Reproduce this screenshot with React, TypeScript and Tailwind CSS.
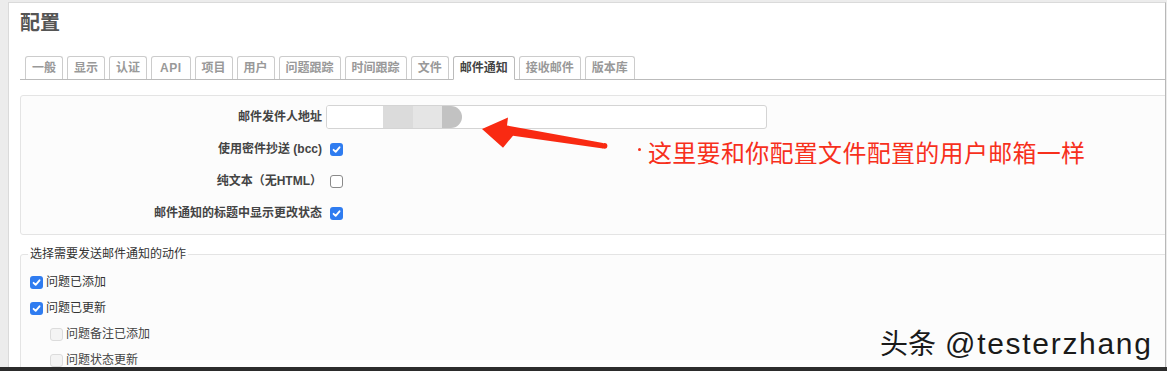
import React from "react";

const tabs = ["一般", "显示", "认证", "API", "项目", "用户", "问题跟踪", "时间跟踪", "文件", "邮件通知", "接收邮件", "版本库"];

function Check({ on, disabled }: { on?: boolean; disabled?: boolean }) {
  if (disabled) {
    return <span className="block w-[13px] h-[13px] rounded-[3px] border border-[#dcdcdc] bg-[#f4f4f4] shrink-0" />;
  }
  if (!on) {
    return <span className="block w-[13px] h-[13px] rounded-[3px] border border-[#8a8a8a] bg-white shrink-0" />;
  }
  return (
    <span className="flex items-center justify-center w-[13px] h-[13px] rounded-[3px] bg-[#2f7cf0] shrink-0">
      <svg width="11" height="11" viewBox="0 0 12 12">
        <path d="M2.8 6.3 L5.1 8.6 L9.3 3.6" fill="none" stroke="#fff" strokeWidth="2" strokeLinecap="round" strokeLinejoin="round" />
      </svg>
    </span>
  );
}

function Row({ label, children }: { label: React.ReactNode; children: React.ReactNode }) {
  return (
    <div className="h-[32px] flex items-center">
      <div className="w-[296px] text-right text-[12px] font-bold text-[#444]">{label}</div>
      {children}
    </div>
  );
}

export default function App() {
  return (
    <div className="relative w-[1167px] h-[371px] overflow-hidden bg-[#ececec] flex flex-col font-['Liberation_Sans','Noto_Sans_CJK_SC',sans-serif]">
      <div className="flex-1 min-h-0 pl-[8px] pt-[2px] flex">
        <div className="w-[1158px] bg-white border-l border-t border-[#dadada] border-r border-r-[#b8b8b8] overflow-hidden pl-[11px] pt-[8px]">
          <h2 className="text-[20px] leading-[24px] font-bold text-[#555]">配置</h2>

          <div className="mt-[21px] flex items-end gap-[4px] pl-[5px] border-b border-[#bbb] h-[24px]">
            {tabs.map((t) => {
              const selected = t === "邮件通知";
              const api = t === "API";
              return (
                <div
                  key={t}
                  className={
                    selected
                      ? "relative mb-[-1px] h-[24px] px-[6px] border border-[#bbb] border-b-white rounded-t-[3px] bg-white text-[12px] leading-[22px] font-bold text-[#444]"
                      : api
                      ? "h-[23px] px-[8px] border border-b-0 border-[#ccc] rounded-t-[3px] bg-white text-[12px] leading-[22px] font-bold tracking-[0.5px] text-[#999]"
                      : "h-[23px] px-[6px] border border-b-0 border-[#ccc] rounded-t-[3px] bg-white text-[12px] leading-[22px] font-bold text-[#999]"
                  }
                >
                  {t}
                </div>
              );
            })}
          </div>

          <div className="mt-[15px] mr-[-10px] border border-[#e4e4e4] bg-[#fcfcfc] rounded-[3px] p-[5px]">
            <Row label="邮件发件人地址">
              <div className="ml-[4px] w-[441px] h-[24px] border border-[#d4d4d4] rounded-[3px] bg-white flex overflow-hidden">
                <div className="w-[56px] h-full bg-white" />
                <div className="w-[30px] h-full bg-[#dbdbdb]" />
                <div className="w-[29px] h-full bg-[#e5e5e5]" />
                <div className="w-[20px] h-full bg-[#c2c2c2] rounded-r-full" />
              </div>
            </Row>
            <Row label="使用密件抄送 (bcc)">
              <span className="ml-[8px]"><Check on /></span>
            </Row>
            <Row label="纯文本（无HTML）">
              <span className="ml-[8px]"><Check /></span>
            </Row>
            <Row label="邮件通知的标题中显示更改状态">
              <span className="ml-[8px]"><Check on /></span>
            </Row>
          </div>

          <fieldset className="mt-[11px] mr-[-10px] border border-[#e4e4e4] bg-[#fcfcfc] rounded-[3px] pl-[7px] pt-[7px]">
            <legend className="px-[2px] text-[12px] leading-[16px] text-[#333]">选择需要发送邮件通知的动作</legend>
            <div className="h-[26px] ml-[2px] flex items-center gap-[3px] text-[12px] text-[#333]">
              <Check on />
              <span>问题已添加</span>
            </div>
            <div className="h-[26px] ml-[2px] flex items-center gap-[3px] text-[12px] text-[#333]">
              <Check on />
              <span>问题已更新</span>
            </div>
            <div className="h-[26px] ml-[22px] flex items-center gap-[3px] text-[12px] text-[#444]">
              <Check disabled />
              <span>问题备注已添加</span>
            </div>
            <div className="h-[26px] ml-[22px] flex items-center gap-[3px] text-[12px] text-[#444]">
              <Check disabled />
              <span>问题状态更新</span>
            </div>
          </fieldset>
        </div>
      </div>
      <div className="h-[4px] bg-[#2b2b2b] shrink-0" />

      <svg className="absolute left-0 top-0 pointer-events-none" width="1167" height="371" viewBox="0 0 1167 371">
        <polygon points="482,129 508,117.5 507,125.5 603,143 603,148.5 513,135.8 503,147.7" fill="#f92a12" />
        <circle cx="604.5" cy="145.8" r="2.9" fill="#f92a12" />
      </svg>

      <div className="absolute left-[635px] top-[140px] flex items-start text-[24px] leading-[28px] text-[#f7301c] tracking-[0.3px]">
        <span className="mt-[8px] ml-[3px] w-[3px] h-[3px] rounded-full bg-[#f7301c]" />
        <span className="ml-[7px]">这里要和你配置文件配置的用户邮箱一样</span>
      </div>

      <div className="absolute left-[880px] top-[326px] flex items-baseline leading-[36px] text-[#1a1a1a] [text-shadow:1px_1px_0_#fff]">
        <span className="text-[28px]">头条</span>
        <span className="ml-[9px] text-[30px] tracking-[1.7px]">@testerzhang</span>
      </div>
    </div>
  );
}
